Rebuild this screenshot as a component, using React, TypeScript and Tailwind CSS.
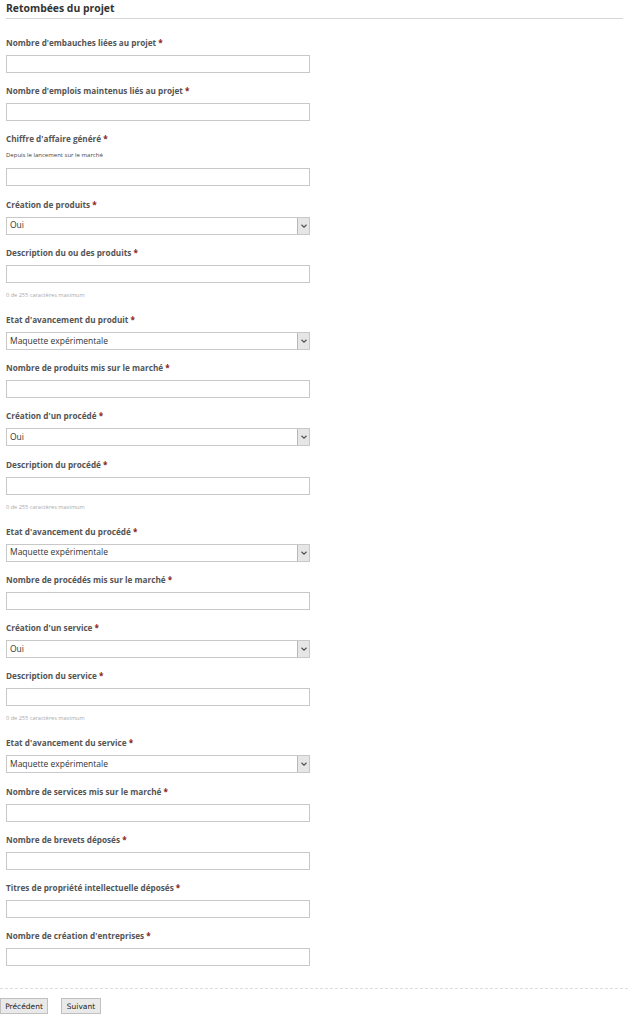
import React from "react";

type Field = {
  label: string;
  kind: "input" | "select";
  value?: string;
  help?: string;
  counter?: boolean;
};

const fields: Field[] = [
  { label: "Nombre d'embauches liées au projet", kind: "input" },
  { label: "Nombre d'emplois maintenus liés au projet", kind: "input" },
  { label: "Chiffre d'affaire généré", kind: "input", help: "Depuis le lancement sur le marché" },
  { label: "Création de produits", kind: "select", value: "Oui" },
  { label: "Description du ou des produits", kind: "input", counter: true },
  { label: "Etat d'avancement du produit", kind: "select", value: "Maquette expérimentale" },
  { label: "Nombre de produits mis sur le marché", kind: "input" },
  { label: "Création d'un procédé", kind: "select", value: "Oui" },
  { label: "Description du procédé", kind: "input", counter: true },
  { label: "Etat d'avancement du procédé", kind: "select", value: "Maquette expérimentale" },
  { label: "Nombre de procédés mis sur le marché", kind: "input" },
  { label: "Création d'un service", kind: "select", value: "Oui" },
  { label: "Description du service", kind: "input", counter: true },
  { label: "Etat d'avancement du service", kind: "select", value: "Maquette expérimentale" },
  { label: "Nombre de services mis sur le marché", kind: "input" },
  { label: "Nombre de brevets déposés", kind: "input" },
  { label: "Titres de propriété intellectuelle déposés", kind: "input" },
  { label: "Nombre de création d'entreprises", kind: "input" },
];

function SelectBox({ value }: { value?: string }) {
  return (
    <div className="flex h-[18px] w-[304px] items-center border border-[#c8c8c8] bg-white">
      <span className="flex-1 pl-[3px] text-[8.5px] leading-none text-[#333]">{value}</span>
      <span className="flex h-full w-[12px] items-center justify-center border-l border-[#b8b8b8] bg-[#e6e6e6]">
        <svg width="6" height="4" viewBox="0 0 6 4">
          <path d="M0.5 0.8 L3 3.2 L5.5 0.8" fill="none" stroke="#555" strokeWidth="1.2" />
        </svg>
      </span>
    </div>
  );
}

function FormField({ f }: { f: Field }) {
  return (
    <div className="mb-[12.2px] flex flex-col">
      <label className="mb-[6px] h-[12px] text-[8.2px] font-bold leading-[12px] text-[#555]">
        {f.label} <span className="text-[#8b1a1a]">*</span>
      </label>
      {f.help && (
        <p className="-mt-[1px] mb-[8px] text-[6px] leading-[10px] text-[#444]">{f.help}</p>
      )}
      {f.kind === "select" ? (
        <SelectBox value={f.value} />
      ) : (
        <div className="h-[18px] w-[304px] border border-[#c8c8c8] bg-white" />
      )}
      {f.counter && (
        <p className="mt-[7px] mb-[2px] text-[5.6px] leading-[10px] text-[#aaa]">
          0 de 255 caractères maximum
        </p>
      )}
    </div>
  );
}

export default function App() {
  return (
    <div className="min-h-[1024px] w-[628px] bg-white font-['Open_Sans',sans-serif]">
      <div className="pb-[10px] pl-[6px] pr-[5px]">
        <h2 className="h-[16px] text-[10.4px] font-bold leading-[16px] text-[#333]">
          Retombées du projet
        </h2>
        <div className="mt-[2px] h-px bg-[#d4d4d4]" />
        <div className="mt-[18px]">
          {fields.map((f) => (
            <FormField key={f.label} f={f} />
          ))}
        </div>
      </div>
      <div className="border-t border-dashed border-[#ddd]" />
      <div className="mt-[9px] flex gap-[13px] font-['DejaVu_Sans',sans-serif]">
        <button className="h-[16px] w-[48px] border border-[#c0c0c0] bg-[#e9e9e9] text-[7.5px] text-[#222]">
          Précédent
        </button>
        <button className="h-[16px] w-[40px] border border-[#c0c0c0] bg-[#e9e9e9] text-[7.5px] text-[#222]">
          Suivant
        </button>
      </div>
    </div>
  );
}
